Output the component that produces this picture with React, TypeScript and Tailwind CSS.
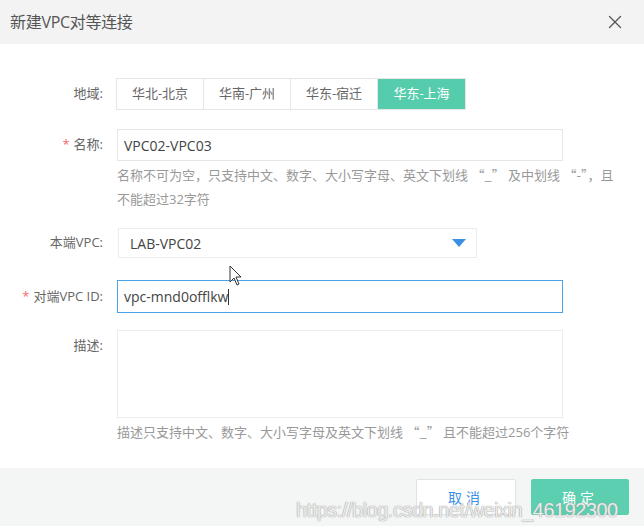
import { X } from "lucide-react";

const regions = ["华北-北京", "华南-广州", "华东-宿迁", "华东-上海"];

function Label({ text, required = false }: { text: string; required?: boolean }) {
  return (
    <div className="w-[105px] shrink-0 text-right text-[13px] text-[#666] pr-[2px]">
      {required && <span className="text-[#f56c6c] mr-[4px]">*</span>}
      {text}
    </div>
  );
}

// full-width quotes like the CJK system font
function Q({ children }: { children: string }) {
  return <span style={{ fontFamily: '"Noto Sans CJK SC", sans-serif' }}>{children}</span>;
}

export default function App() {
  return (
    <div
      className="relative w-[644px] h-[526px] bg-white overflow-hidden flex flex-col"
      style={{ fontFamily: '"Open Sans", "Noto Sans CJK SC", sans-serif' }}
    >
      <header className="h-[44px] bg-[#f3f3f3] flex items-center justify-between pl-[10px] pr-[18px]">
        <h1 className="text-[16px] text-[#555] tracking-[-0.3px]">新建VPC对等连接</h1>
        <X className="w-[22px] h-[22px] text-[#555]" strokeWidth={1.4} />
      </header>

      <main className="flex-1 pt-[34px]">
        {/* 地域 */}
        <div className="flex items-center">
          <Label text="地域:" />
          <div className="ml-[11px] flex border border-[#e6e6e6] h-[32px]">
            {regions.map((r, i) => (
              <div
                key={r}
                className={
                  i === regions.length - 1
                    ? "w-[87px] flex items-center justify-center text-[13px] bg-[#55ccab] text-white"
                    : "w-[87px] flex items-center justify-center text-[13px] text-[#666] border-r border-[#e6e6e6]"
                }
              >
                {r}
              </div>
            ))}
          </div>
        </div>

        {/* 名称 */}
        <div className="flex items-start mt-[19px]">
          <div className="h-[32px] flex items-center">
            <Label text="名称:" required />
          </div>
          <div className="ml-[12px]">
            <div className="w-[446px] h-[32px] border border-[#e6e6e6] flex items-center px-[6px] text-[14px] text-[#444]">
              VPC02-VPC03
            </div>
            <div className="text-[13px] text-[#999] leading-[24px] mt-[2px] whitespace-nowrap">
              <div>
                名称不可为空，只支持中文、数字、大小写字母、英文下划线 <Q>“_”</Q> 及中划线 <Q>“-”</Q>，且
              </div>
              <div>不能超过32字符</div>
            </div>
          </div>
        </div>

        {/* 本端VPC */}
        <div className="flex items-center mt-[17px]">
          <Label text="本端VPC:" />
          <div className="ml-[13px] w-[359px] h-[30px] border border-[#ececec] flex items-center justify-between pl-[11px] pr-[10px] text-[14px] text-[#444]">
            <span>LAB-VPC02</span>
            <svg width="14" height="8" viewBox="0 0 14 8">
              <path d="M0 0 H14 L7 8 Z" fill="#3d8fe4" />
            </svg>
          </div>
        </div>

        {/* 对端VPC ID */}
        <div className="flex items-center mt-[22px]">
          <Label text="对端VPC ID:" required />
          <div className="ml-[12px] w-[446px] h-[33px] border border-[#4aa3e8] flex items-center px-[6px] text-[14px] text-[#444]">
            vpc-mnd0offlkw
            <span className="inline-block w-[1px] h-[16px] bg-[#333]" />
          </div>
        </div>

        {/* 描述 */}
        <div className="flex items-start mt-[17px]">
          <div className="pt-[6px]">
            <Label text="描述:" />
          </div>
          <div className="ml-[12px]">
            <div className="w-[446px] h-[88px] border border-[#ececec]" />
            <div className="text-[13px] text-[#999] leading-[24px] mt-[2px] whitespace-nowrap">
              描述只支持中文、数字、大小写字母及英文下划线 <Q>“_”</Q> 且不能超过256个字符
            </div>
          </div>
        </div>
      </main>

      <footer className="h-[58px] bg-[#f4f5f5] flex items-center justify-end gap-[15px] pr-[15px]">
        <button className="w-[100px] h-[36px] bg-white border border-[#e2e2e2] rounded-[2px] text-[14px] text-[#3d8fe4] tracking-[4px]">
          取消
        </button>
        <button className="w-[98px] h-[36px] bg-[#5ccfb0] rounded-[2px] text-[14px] text-white tracking-[4px]">
          确定
        </button>
      </footer>

      {/* cursor */}
      <svg className="absolute left-[229px] top-[265px]" width="14" height="22" viewBox="0 0 14 22">
        <path d="M1 1 L1 17 L5 13 L8 20 L10 19 L7 12 L12 12 Z" fill="white" stroke="#333" strokeWidth="1" />
      </svg>

      {/* watermark */}
      <div
        className="absolute left-[296px] top-[495px] text-[20px] text-white/80 tracking-[-0.5px]"
        style={{ fontFamily: '"Liberation Sans", sans-serif', textShadow: "0 0 1px #999, 0 0 1px #999" }}
      >
        https://blog.csdn.net/weixin_46192300
      </div>
    </div>
  );
}
